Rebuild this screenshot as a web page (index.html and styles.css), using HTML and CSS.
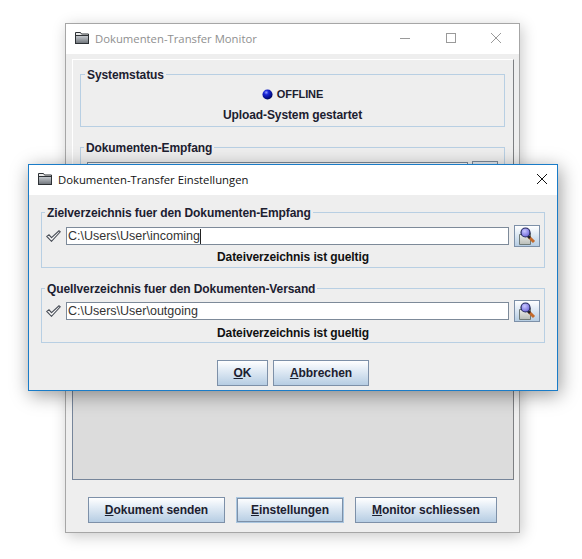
FILE: index.html
```html
<!DOCTYPE html>
<html lang="de">
<head>
<meta charset="utf-8">
<title>Dokumenten-Transfer</title>
<link rel="stylesheet" href="styles.css">
</head>
<body>
<svg class="defs" width="0" height="0" aria-hidden="true">
  <defs>
    <linearGradient id="folderFront" x1="0" y1="0" x2="0" y2="1">
      <stop offset="0" stop-color="#c9cdd2"/>
      <stop offset="1" stop-color="#6d7278"/>
    </linearGradient>
    <radialGradient id="led" cx="0.38" cy="0.3" r="0.75">
      <stop offset="0" stop-color="#8f9cff"/>
      <stop offset="0.3" stop-color="#1a26d8"/>
      <stop offset="0.8" stop-color="#000a80"/>
      <stop offset="1" stop-color="#00043a"/>
    </radialGradient>
    <linearGradient id="paper" x1="0" y1="0" x2="0" y2="1">
      <stop offset="0" stop-color="#f4f4f2"/>
      <stop offset="1" stop-color="#b9bdb8"/>
    </linearGradient>
    <radialGradient id="lens" cx="0.4" cy="0.35" r="0.7">
      <stop offset="0" stop-color="#c8c6ff"/>
      <stop offset="1" stop-color="#6a62d8"/>
    </radialGradient>
    <symbol id="folder" viewBox="0 0 14 12">
      <path d="M.5 3V.5h5l1 1.500h7v9.500H.5z" fill="#ececec" stroke="#2d3135"/>
      <rect x=".5" y="3.500" width="13" height="8" fill="url(#folderFront)" stroke="#2d3135"/>
    </symbol>
    <symbol id="check" viewBox="0 0 15 12">
      <path d="M.8 6.500L3 4.800l2.500 2.800L13 .8l1.300 1L5.500 11.300z" fill="#fafafa" stroke="#4a4f58" stroke-width="1.100"/>
    </symbol>
    <symbol id="browse" viewBox="0 0 20 20">
      <path d="M2.500 8.500h5l1-1.500h5v11.500h-11z" fill="url(#paper)" stroke="#6f7a78"/>
      <path d="M11.500 10.500l5.500 5.500" stroke="#c46a2a" stroke-width="3"/>
      <path d="M11 10l2 2" stroke="#20232e" stroke-width="2.500"/>
      <circle cx="8.500" cy="6.500" r="4.500" fill="url(#lens)" stroke="#23285c" stroke-width="1.200"/>
    </symbol>
  </defs>
</svg>

<section class="window monitor">
  <header class="titlebar">
    <svg class="title-icon"><use href="#folder"/></svg>
    <span class="title-text inactive">Dokumenten-Transfer Monitor</span>
    <div class="caption-buttons">
      <svg class="caption" viewBox="0 0 12 12"><path d="M1 6.500h10" stroke="#9a9a9a"/></svg>
      <svg class="caption" viewBox="0 0 12 12"><rect x="1.500" y="1.500" width="9" height="9" fill="none" stroke="#9a9a9a"/></svg>
      <svg class="caption" viewBox="0 0 12 12"><path d="M1 1l10 10M11 1L1 11" stroke="#9a9a9a"/></svg>
    </div>
  </header>
  <div class="monitor-body">
    <div class="monitor-scroll">
      <fieldset class="group status-group">
        <legend>Systemstatus</legend>
        <div class="status-line">
          <svg class="led" viewBox="0 0 12 12"><circle cx="6" cy="6" r="5.500" fill="url(#led)"/></svg>
          <span>OFFLINE</span>
        </div>
        <div class="status-message">Upload-System gestartet</div>
      </fieldset>
      <fieldset class="group receive-group">
        <legend>Dokumenten-Empfang</legend>
        <div class="receive-row">
          <div class="monitor-path"></div>
          <div class="monitor-browse"></div>
        </div>
      </fieldset>
      <div class="log-panel"></div>
    </div>
    <div class="monitor-actions">
      <button class="btn send"><u>D</u>okument senden</button>
      <button class="btn settings focused"><u>E</u>instellungen</button>
      <button class="btn close"><u>M</u>onitor schliessen</button>
    </div>
  </div>
</section>

<section class="window dialog">
  <header class="titlebar dialog-bar">
    <svg class="title-icon"><use href="#folder"/></svg>
    <span class="title-text">Dokumenten-Transfer Einstellungen</span>
    <svg class="dialog-close" viewBox="0 0 12 12"><path d="M1 1l10 10M11 1L1 11" stroke="#111"/></svg>
  </header>
  <div class="dialog-body">
    <fieldset class="group path-group">
      <legend>Zielverzeichnis fuer den Dokumenten-Empfang</legend>
      <div class="path-row">
        <svg class="check"><use href="#check"/></svg>
        <div class="path-input">C:\Users\User\incoming<span class="caret"></span></div>
        <button class="btn icon-btn" aria-label="Durchsuchen"><svg class="browse"><use href="#browse"/></svg></button>
      </div>
      <div class="valid">Dateiverzeichnis ist gueltig</div>
    </fieldset>
    <fieldset class="group path-group">
      <legend>Quellverzeichnis fuer den Dokumenten-Versand</legend>
      <div class="path-row">
        <svg class="check"><use href="#check"/></svg>
        <div class="path-input">C:\Users\User\outgoing</div>
        <button class="btn icon-btn" aria-label="Durchsuchen"><svg class="browse"><use href="#browse"/></svg></button>
      </div>
      <div class="valid">Dateiverzeichnis ist gueltig</div>
    </fieldset>
    <div class="dialog-actions">
      <button class="btn ok"><u>O</u>K</button>
      <button class="btn cancel"><u>A</u>bbrechen</button>
    </div>
  </div>
</section>
</body>
</html>
```

FILE: styles.css
```css
* { box-sizing: border-box; }

html, body {
  margin: 0;
  height: 100%;
}

body {
  position: relative;
  background: #fff;
  overflow: hidden;
  font-family: "Liberation Sans", Arial, sans-serif;
  font-size: 12px;
  color: #1c2030;
}

.defs { position: absolute; }

.window {
  position: absolute;
  display: flex;
  flex-direction: column;
  background: #eeeeee;
}

.monitor {
  left: 65px;
  top: 23px;
  width: 455px;
  height: 510px;
  border: 1px solid #a6a6a6;
  box-shadow: 2px 3px 14px rgba(0, 0, 0, 0.22);
}

.dialog {
  left: 28px;
  top: 164px;
  width: 530px;
  height: 227px;
  border: 1px solid #1a7cc8;
  box-shadow: 2px 4px 18px rgba(0, 0, 0, 0.4);
}

.titlebar {
  display: flex;
  align-items: center;
  flex: none;
  height: 30px;
  padding-left: 9px;
  background: #fff;
}

.title-icon {
  width: 14px;
  height: 12px;
  flex: none;
  margin-bottom: 2px;
}

.title-text {
  margin-left: 6px;
  margin-bottom: 1px;
  font-family: "Open Sans", sans-serif;
  font-size: 11.3px;
  color: #111;
}

.title-text.inactive { color: #8f8f8f; }

.caption-buttons {
  display: flex;
  gap: 33.500px;
  margin-left: auto;
  margin-right: 17px;
  margin-bottom: 2px;
}

.caption {
  width: 12px;
  height: 12px;
}

.dialog-close {
  width: 12px;
  height: 12px;
  margin-left: auto;
  margin-right: 9px;
  margin-bottom: 2px;
}

.monitor-body {
  flex: 1;
  display: flex;
  flex-direction: column;
  padding: 5px 5px 9px 6px;
}

.monitor-scroll {
  flex: 1;
  display: flex;
  flex-direction: column;
  padding: 6px 8px 0 7px;
  border-top: 1px solid #fff;
  border-left: 1px solid #fff;
  border-right: 1px solid #7d7f82;
}

.group {
  margin: 0;
  padding: 0;
  min-width: 0;
  border: 1px solid #b8cfe3;
}

.group legend {
  margin-left: 3px;
  padding: 2px 2px 0;
  font-weight: bold;
  font-size: 12px;
  line-height: 14px;
  letter-spacing: -0.1px;
  color: #1c2030;
}

.group.status-group legend { margin-left: 4px; }

.status-group {
  height: 61px;
  flex: none;
  font-weight: bold;
}

.status-line {
  display: flex;
  align-items: center;
  justify-content: center;
  gap: 4px;
  height: 16px;
  margin-top: 4px;
  font-size: 11px;
  letter-spacing: -0.1px;
}

.led {
  width: 11px;
  height: 11px;
}

.status-message {
  margin-top: 6px;
  line-height: 15px;
  text-align: center;
  letter-spacing: -0.1px;
}

.receive-group {
  flex: none;
  height: 70px;
  margin-top: 12px;
}

.receive-row {
  display: flex;
  gap: 4px;
  padding: 0 6px;
  margin-top: 6px;
}

.monitor-path {
  flex: 1;
  height: 22px;
  margin-top: 1px;
  background: #fff;
  border: 1px solid #7d8a99;
}

.monitor-browse {
  width: 26px;
  height: 22px;
  background: #e4eaf1;
  border: 1px solid #7d8a99;
}

.log-panel {
  flex: 1;
  margin: 7px -8px 0 -8px;
  background: #dcdcdc;
  border-left: 1px solid #76859a;
  border-bottom: 1px solid #76859a;
}

.monitor-actions {
  flex: none;
  display: flex;
  gap: 11px;
  padding: 17px 0 0 16px;
}

.btn {
  height: 26px;
  padding: 0;
  border: 1px solid #7d90a8;
  background: linear-gradient(#ffffff 0%, #e4edf6 35%, #b6cde3 100%);
  font-family: "Liberation Sans", Arial, sans-serif;
  font-size: 12px;
  font-weight: bold;
  letter-spacing: -0.05px;
  color: #1c2030;
}

.focused {
  border-color: #a9c6e0;
  box-shadow: inset 0 0 0 1px #7d90a8;
}

.send { width: 137px; }
.settings { width: 108px; }
.close { width: 142px; }
.ok { width: 51px; }
.cancel { width: 96px; }

.dialog-body {
  flex: 1;
  display: flex;
  flex-direction: column;
  padding: 9px 12px 0;
}

.path-group {
  flex: none;
  height: 64px;
  margin-bottom: 12px;
}

.path-group + .path-group {
  height: 63px;
  margin-bottom: 0;
}

.path-row {
  display: flex;
  align-items: center;
  height: 22px;
  margin-top: 5px;
  padding-left: 4px;
}

.path-group + .path-group .path-row { margin-top: 4px; }

.check {
  width: 15px;
  height: 12px;
  flex: none;
}

.path-input {
  flex: 1;
  display: flex;
  align-items: center;
  height: 18px;
  margin-left: 5px;
  padding-left: 1px;
  background: #fff;
  border: 1px solid #7d8a99;
  font-size: 12.500px;
  font-weight: normal;
  color: #333;
}

.caret {
  width: 1px;
  height: 15px;
  background: #222;
}

.icon-btn {
  flex: none;
  display: flex;
  align-items: center;
  justify-content: center;
  width: 26px;
  height: 22px;
  margin: 0 4px 0 5px;
}

.browse {
  width: 20px;
  height: 20px;
}

.valid {
  margin-top: 3px;
  line-height: 14px;
  text-align: center;
  font-weight: bold;
  letter-spacing: -0.1px;
  color: #111;
}

.path-group + .path-group .valid { margin-top: 4px; }

.dialog-actions {
  display: flex;
  justify-content: center;
  gap: 5px;
  margin-top: 17px;
}
```
